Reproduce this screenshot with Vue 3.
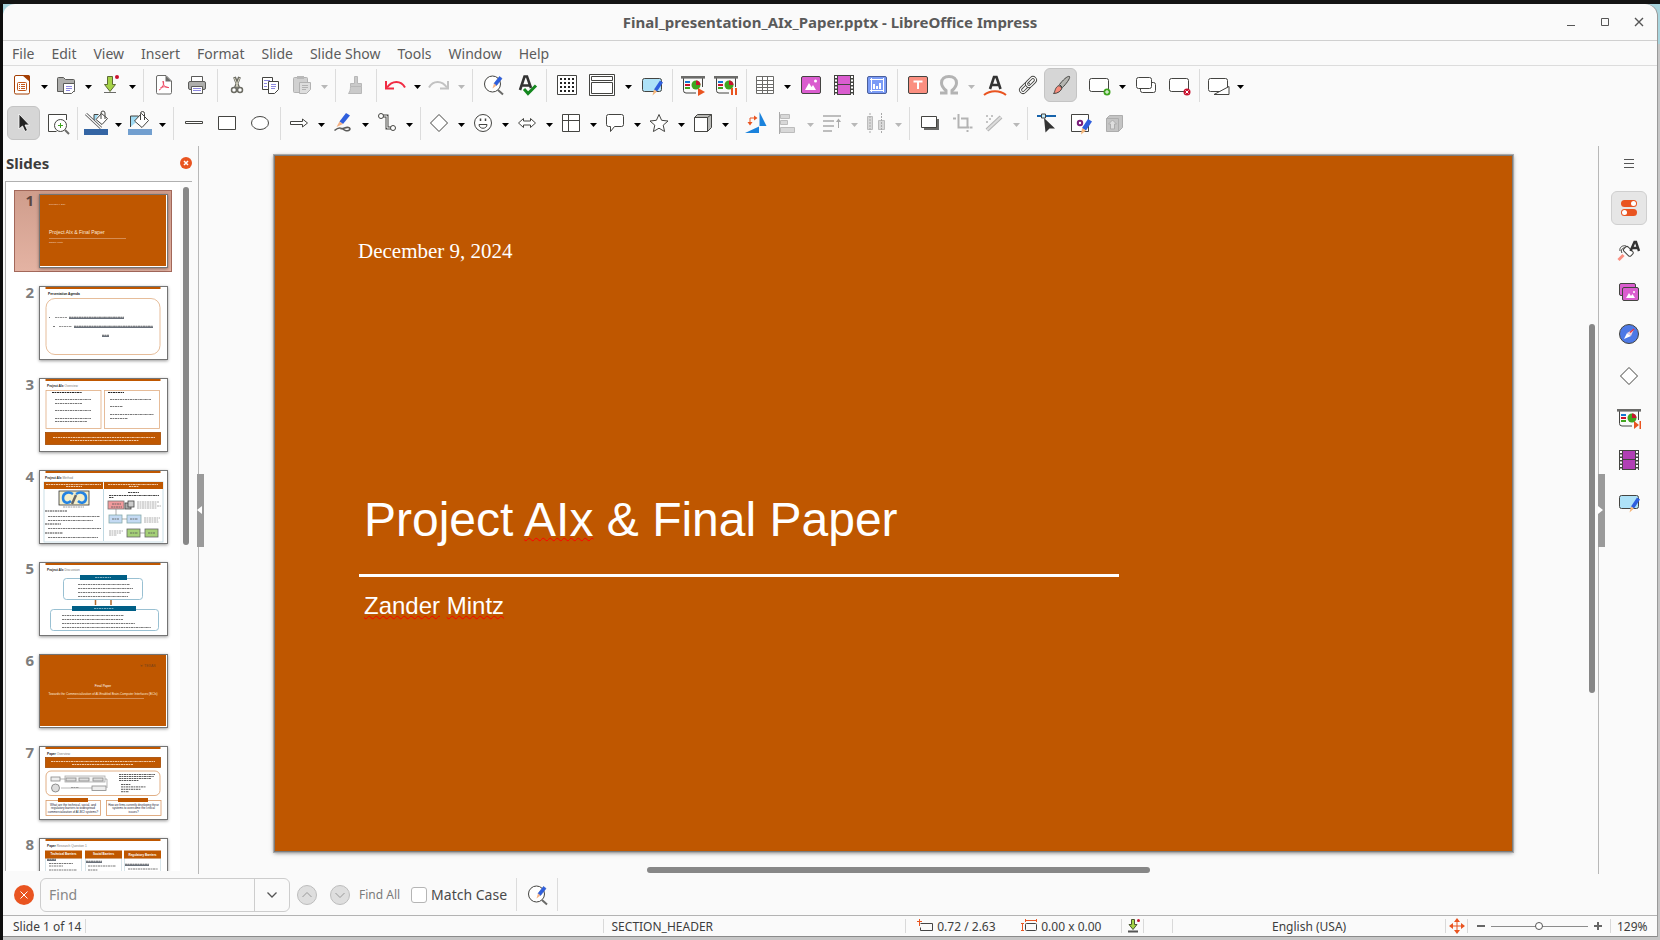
<script setup>
import { ref } from 'vue'

const menus = ['File', 'Edit', 'View', 'Insert', 'Format', 'Slide', 'Slide Show', 'Tools', 'Window', 'Help']

const dark = '#444441'
const gray = '#a9a9a9'

const pencil = '<path d="M18.5 3.5l2.5 2-5.5 7-2.5-2z" fill="#2f5fdd" stroke="#2450c4" stroke-width=".6"/><path d="M13 10.5l2.5 2-4 3z" fill="#f5b183"/>'
const screen = `<path d="M2.5 5v12.5a2.5 2.5 0 0 0 2.5 2.5h10M21.5 5v9" fill="none" stroke="${dark}"/><path d="M0 3h24v2.6H0z" fill="#6b6b69"/><path d="M4 8h5v2H4z" fill="#1279d3"/><path d="M4 11h5v2H4z" fill="#c9122f"/><path d="M4 14h5v2H4z" fill="#3fa51f"/><circle cx="15" cy="12" r="4.5" fill="#3fa51f"/><path d="M15 12V7.5a4.5 4.5 0 0 1 4.5 4.5z" fill="#c9122f"/>`
const boardPen = `<rect x="2.5" y="5.5" width="19" height="13" rx="2" fill="#aee2f8" stroke="${dark}"/><path d="M20 7.5l3 2-6 9-3-2z" fill="#2f5fdd"/><path d="M14 16.5l3 2-4.5 4z" fill="#f6b77a"/>`
const film = (fill) => `<path d="M2 2h20v20H2z" fill="${dark}"/><path d="M6 3h12v8H6zM6 12h12v9H6z" fill="${fill}"/><path d="M4 3v19M20 3v19" stroke="#fff" stroke-width="2" stroke-dasharray="2 1.5"/>`
const glass = `<circle cx="11.5" cy="11" r="8" fill="#fff" stroke="${dark}"/><path d="M17 17l5 4.5" stroke="#6b6b69" stroke-width="2"/>${pencil}`

const icons = {
  impress: `<path d="M4.5 4a1.5 1.5 0 0 1 1.5-1.5h12a1.5 1.5 0 0 1 1.5 1.5v15.5a1.5 1.5 0 0 1-1.5 1.5H6a1.5 1.5 0 0 1-1.5-1.5z" fill="#fff" stroke="#a33e03"/><path d="M12 2h6a2 2 0 0 1 2 2v5z" fill="#a33e03"/><rect x="7.5" y="9.5" width="9" height="8" rx="1" fill="none" stroke="#c2571a"/><path d="M9 11.5h1m1 0h4m-6 2h1m1 0h4m-6 2h1m1 0h4" stroke="#c2571a"/>`,
  folder: `<path d="M3.5 5.5a1 1 0 0 1 1-1h5l2 2h8a1 1 0 0 1 1 1v11h-17z" fill="#aeaeac" stroke="#5b5b59"/><path d="M9.5 10.5h11v7l-3 3h-8z" fill="#fff" stroke="#5b5b59"/><path d="M12 13.5h6m-6 2h6m-6 2h4" stroke="#8d88e0"/>`,
  save: `<path d="M9.5 3.5h5v8h3l-5.5 7-5.5-7h3z" fill="#a5d346" stroke="#5d6b35"/><path d="M6 19.5h12" stroke="#6b6b69"/><circle cx="19" cy="4" r="2" fill="#c9122f"/>`,
  pdf: `<path d="M4.5 4a1.5 1.5 0 0 1 1.5-1.5h8l5.5 5.5v11.5a1.5 1.5 0 0 1-1.5 1.5H6a1.5 1.5 0 0 1-1.5-1.5z" fill="#fff" stroke="#6b6b69"/><path d="M13.5 2.5l6 6h-6z" fill="#6b6b69"/><path d="M11 8c2 2-1 8-4 9M11 8c0 5 3 7 6 6.5M8.5 14.5c3-1 5-1 8 0" fill="none" stroke="#ee4a63"/>`,
  print: `<path d="M6.5 3.5h11v5h-11z" fill="#fff" stroke="#5b5b59"/><rect x="3.5" y="8.5" width="17" height="8" rx="1.5" fill="#aeaeac" stroke="#5b5b59"/><path d="M6.5 13.5h11v7h-11z" fill="#fff" stroke="#5b5b59"/><path d="M8 15.5h8m-8 2h8" stroke="#8d88e0"/>`,
  cut: `<path d="M8.5 4l4 10.5M13.5 4l-4 10.5" stroke="#6b6b62" stroke-width="3"/><path d="M8.5 5l3.5 9M13.5 5l-3.5 9" stroke="#d8d6c4"/><circle cx="8" cy="17" r="2.5" fill="#fff" stroke="#6b6b62" stroke-width="1.5"/><circle cx="14" cy="17" r="2.5" fill="#fff" stroke="#6b6b62" stroke-width="1.5"/>`,
  copy: `<path d="M3.5 4.5h10v12h-10z" fill="#fff" stroke="${dark}"/><path d="M5 7.5h6m-6 3h3m-3 3h3" stroke="#8d88e0"/><path d="M9.500 8.5h10v8l-4 4h-6z" fill="#fff" stroke="${dark}"/><path d="M12 11.5h5m-5 2h5m-5 2h4" stroke="#8d88e0"/>`,
  paste: '<rect x="3.5" y="4.5" width="14" height="15" rx="1" fill="#d0d0d0" stroke="#b2b2b2"/><path d="M7 3h7v3H7z" fill="#b8b8b8"/><path d="M9.5 9.5h11v7l-4 4h-7z" fill="#dedede" stroke="#b2b2b2"/><path d="M12 12.5h6m-6 2h6m-6 2h4" stroke="#b2b2b2"/>',
  clone: '<path d="M10.5 3.5h3v7h4v3h-11v-3h4z" fill="#cacaca" stroke="#b8b8b8"/><path d="M6.5 13.5h11v7h-13c1.5-2 2-4 2-7z" fill="#cacaca" stroke="#b8b8b8"/>',
  undo: '<path d="M4 14.5c5-7.5 14-7.5 18 0" fill="none" stroke="#f02b43" stroke-width="2"/><path d="M3 8v7.5h8" fill="none" stroke="#f02b43" stroke-width="2"/>',
  redo: '<path d="M20 14.5c-5-7.5-14-7.5-18 0" fill="none" stroke="#c2c2c2" stroke-width="2"/><path d="M21 8v7.5h-8" fill="none" stroke="#c2c2c2" stroke-width="2"/>',
  find: glass,
  spell: '<path d="M6 17l4.5-13.5H13L17 15M8 12.5h8" fill="none" stroke="#333" stroke-width="2.6"/><path d="M10 16l4 4.5 8-8" fill="none" stroke="#14871f" stroke-width="3"/>',
  grid: `<path d="M2.5 2.5h19v19h-19z" fill="#fff" stroke="${dark}"/><path d="M5 6h15M5 10h15M5 14h15M5 18h15" stroke="#222" stroke-width="2" stroke-dasharray="2 2"/>`,
  display: `<path d="M-1.5 1.5h25v21h-25z" fill="#fff" stroke="${dark}"/><path d="M.5 3.5h21v4H.5zM.5 9.5h21v11H.5z" fill="#fff" stroke="${dark}"/>`,
  master: boardPen,
  start: `${screen}<path d="M17 15l7 4-7 4z" fill="#e95420"/>`,
  pause: `${screen}<path d="M18 15v7m4-7v7" stroke="#e95420" stroke-width="2"/>`,
  table: `<path d="M3.5 3.5h17v17h-17zM3.5 7.5h17m-17 4h17m-17 3h17m-17 3h17M9.5 3.5v17m5-17v17" fill="#fff" stroke="#6b6b69"/>`,
  image: `<rect x="2.5" y="3.5" width="19" height="17" rx="1.5" fill="#da5dcf" stroke="${dark}"/><path d="M6 17l4-7 2.5 4 1.5-2 3 5z" fill="#fff"/><circle cx="16.5" cy="8" r="1.5" fill="#fff"/>`,
  video: film('#da5dcf'),
  chart: '<rect x="2.5" y="3.5" width="19" height="17" rx="1.5" fill="#7a9bf6" stroke="#4a5f9c"/><path d="M5 6.5h14M5 17.5h14M6.5 5v14M18.5 5v14" stroke="#fff"/><path d="M9 16v-5m3 5v-3m3 3v-6" stroke="#fff" stroke-width="2"/>',
  text: `<rect x="2.5" y="3.5" width="19" height="17" rx="1.5" fill="#fb8f80" stroke="${dark}"/><path d="M7.5 8.5h9M12 8v8" fill="none" stroke="#fff" stroke-width="2"/>`,
  omega: '<path d="M3 20h6v-2.5C6 15 4.5 13 4.5 10c0-4 3-6.5 7.5-6.5s7.5 2.5 7.5 6.5c0 3-1.5 5-4.5 7.5V20h6" fill="none" stroke="#b3b3b3" stroke-width="3"/>',
  fontwork: '<path d="M7 16l4-12h2.5l4 12M8.5 12h7.5" fill="none" stroke="#333" stroke-width="2.6"/><path d="M1 22c6-5 16-5 22 0" fill="none" stroke="#e95420" stroke-width="2"/>',
  link: `<g fill="none" transform="rotate(-45 12 12)"><rect x="2.5" y="9.5" width="10.5" height="5" rx="2.5" stroke="${dark}" stroke-width="3"/><rect x="2.5" y="9.5" width="10.5" height="5" rx="2.5" stroke="#fff" stroke-width="1.2"/><rect x="11" y="9.5" width="10.5" height="5" rx="2.5" stroke="${dark}" stroke-width="3"/><rect x="11" y="9.5" width="10.5" height="5" rx="2.5" stroke="#fff" stroke-width="1.2"/></g>`,
  brush: `<path d="M20.5 3.5c1 2-4 8-7 11l-3-3c3-4 8-9 10-8z" fill="#b5b5b1" stroke="${dark}"/><path d="M10 12.5l3 2.5c-1 3-4 5.5-8.5 5.5 2-2 1-6 5.5-8z" fill="#f88b7b" stroke="${dark}"/>`,
  slideNew: `<rect x="4.5" y="5.5" width="19" height="13" rx="2" fill="#fff" stroke="${dark}"/><circle cx="22" cy="19" r="3.5" fill="#3fa51f"/><path d="M20 19h4m-2-2v4" stroke="#fff"/>`,
  slideDup: `<rect x="6.5" y="9.5" width="15" height="10" rx="2" fill="#fff" stroke="${dark}"/><rect x="2.5" y="4.5" width="15" height="11" rx="2" fill="#fff" stroke="${dark}"/>`,
  slideDel: `<rect x="2.5" y="5.5" width="19" height="13" rx="2" fill="#fff" stroke="${dark}"/><circle cx="20" cy="19" r="3.5" fill="#c9122f"/><path d="M18.5 17.5l3 3m0-3l-3 3" stroke="#fff"/>`,
  slideLayout: `<rect x="2.5" y="5.5" width="19" height="13" rx="2" fill="#fff" stroke="${dark}"/><path d="M8 21.5h15v-8z" fill="#fff" stroke="${dark}"/>`,

  select: '<path d="M7 3v15l3.5-3 2.500 5.5 2.5-1.2-2.5-5.3h4.5z" fill="#222" stroke="#fff" stroke-width=".8"/>',
  zoomPan: `<path d="M21.5 9V3.5h-18v17h8" fill="#fff" stroke="${dark}"/><path d="M4 4h17v6H4z" fill="#fff"/><circle cx="15.5" cy="14.5" r="6" fill="#fff" stroke="${dark}"/><path d="M20 19l4 4" stroke="#6b6b69" stroke-width="2"/><path d="M15.5 12v5m-2.5-2.5h5" stroke="#3fa51f"/>`,
  lineColor: `<path d="M0 18h24v6H0z" fill="#3465a4"/><path d="M10 11V3.5h4.500" fill="#9fdaf3" stroke="${dark}"/><path d="M17.500 2.5l6 5-5.500 6-6-5z" fill="#fff" stroke="${dark}"/><path d="M17 8V2a2 2 0 0 1 4 0v6" fill="none" stroke="${dark}"/><path d="M2 3l15 14" stroke="#555" stroke-width="3"/><path d="M2 3l15 14" stroke="#fff" stroke-width="1.2"/>`,
  fillColor: `<path d="M0 18h24v6H0z" fill="#729fcf"/><path d="M2.5 16V5h8v4" fill="#9fdaf3" stroke="${dark}"/><path d="M13.5 2.5l7 7-6.5 7-7.5-6.5z" fill="#fff" stroke="${dark}"/><path d="M12.5 9V2.500a2 2 0 0 1 4 0V9" fill="none" stroke="${dark}"/>`,
  line: `<path d="M3.5 10.5h17v2h-17z" fill="#fff" stroke="${dark}"/>`,
  rect: `<path d="M3.5 5.5h17v13h-17z" fill="#fff" stroke="${dark}"/>`,
  ellipse: `<ellipse cx="12" cy="12" rx="8.5" ry="6.5" fill="#fff" stroke="${dark}"/>`,
  arrow: `<path d="M3.5 10.5h12v-2.5l5 4-5 4v-2.500h-12z" fill="#fff" stroke="${dark}"/>`,
  curve: `<path d="M15 2l4 2.5-7 8.5-3.5-2.5z" fill="#2f5fdd"/><path d="M8.5 10.5l3.5 2.5-6.5 3z" fill="#f5b183"/><path d="M3.500 19.5c6-5 8-1 11 0 4 1 6-2 3-3s-5 2-8 1" fill="none" stroke="#5b5b59" stroke-width="1.6"/>`,
  connector: `<path d="M5 5h7v12h7" fill="none" stroke="${dark}" stroke-width="3"/><path d="M5 5h7v12h7" fill="none" stroke="#fff"/><circle cx="6" cy="5" r="2.5" fill="#fff" stroke="${dark}"/><circle cx="18" cy="17" r="2.5" fill="#fff" stroke="${dark}"/>`,
  diamond: `<path d="M12 3.5l8.5 8.5-8.5 8.5L3.5 12z" fill="#fff" stroke="${dark}"/>`,
  smiley: `<circle cx="12" cy="12" r="8.5" fill="#fff" stroke="${dark}"/><path d="M9.5 7.5v2.500m5-2.5v2.5" stroke="${dark}" stroke-width="1.5"/><path d="M8 13.5h8c0 5-8 5-8 0z" fill="#fff" stroke="${dark}"/>`,
  doubleArrow: `<path d="M3.5 12l5-4.5v2.5h7V7.5l5 4.5-5 4.5V14h-7v2.5z" fill="#fff" stroke="${dark}"/>`,
  flow: `<path d="M3.5 3.5h17v17h-17zM3.5 9.5h17M9.5 3.5v17" fill="#fff" stroke="${dark}"/>`,
  callout: `<path d="M5.5 3.5h13a2 2 0 0 1 2 2v8a2 2 0 0 1-2 2h-7l-4 5v-5h-2a2 2 0 0 1-2-2v-8a2 2 0 0 1 2-2z" fill="#fff" stroke="${dark}"/>`,
  star: `<path d="M12 3.5l2.6 5.8 6.4.7-4.8 4.2 1.4 6.3-5.6-3.3-5.6 3.3 1.4-6.3L3 10l6.4-.7z" fill="#fff" stroke="${dark}"/>`,
  cube: `<path d="M3.5 6.5l3-3h14v13l-4 4z" fill="#b9b9b6" stroke="${dark}"/><path d="M3.5 6.5h13v14h-13zM16.500 6.5l4-3" fill="#fff" stroke="${dark}"/>`,
  rotate: '<path d="M14.5 1v14h7z" fill="#1a82dc"/><path d="M0 22l14-6.500v6.500z" fill="#1a82dc"/><path d="M5 12V7h6" fill="none" stroke="#e95420"/><path d="M2.5 11h5L5 14.5zM9 4.5v5l3.5-2.5z" fill="#e95420"/>',
  align: `<path d="M3.5 1v22" stroke="${gray}"/><path d="M4.5 3.5h9v4h-9zM4.5 9.5h7v4h-7zM4.5 16.5h14v5h-14z" fill="#d8d8d8" stroke="#bcbcbc"/>`,
  arrange: '<path d="M3 5h18M3 10h11M3 15h11M3 20h9" stroke="#bdbdbd" stroke-width="2"/><path d="M18.5 17V9" stroke="#a9a9a9"/><path d="M16 11l2.5-3.5L21 11z" fill="#a9a9a9"/>',
  distribute: '<path d="M3.5 5.5h5v13h-5zM14.5 9.5h6v9h-6z" fill="#d8d8d8" stroke="#bcbcbc"/><path d="M6 2v20M17.5 2v20" stroke="#a9a9a9" stroke-dasharray="2 1"/>',
  shadow: `<path d="M6 8h15v11H6z" fill="#6b6b69"/><path d="M3.5 5.5h15v11h-15z" fill="#fff" stroke="${dark}"/>`,
  crop: '<path d="M7.5 3v13.5H18M2 7.5h3m5 0h6.500v9.5m0 2v2m2-4.5h3" fill="none" stroke="#b3b3b3" stroke-width="2"/>',
  wand: '<path d="M5 19L19 6" stroke="#b3b3b3" stroke-width="4"/><path d="M5 19L19 6" stroke="#dcdcdc" stroke-width="2"/><path d="M4 5h2m3 0h2m-4 3h2M4 11h2" stroke="#b3b3b3" stroke-width="1.5"/>',
  points: '<path d="M1 5h19" stroke="#1763ab" stroke-width="2"/><path d="M5.5 3h4v4h-4z" fill="#c3ecfa" stroke="#444"/><path d="M8 7l11 10.500h-5.500l-4 4z" fill="#333"/>',
  glue: `<path d="M2.5 3.5h17v17h-17z" fill="#fff" stroke="${dark}"/><circle cx="11" cy="12" r="2.2" fill="#fff" stroke="#7b1f7b" stroke-width="2"/><path d="M19 8l4 2.500-6 9-4-2.500z" fill="#2f5fdd"/><path d="M13 17l4 2.500-5 4z" fill="#f6b77a"/>`,
  extrude: '<path d="M4.5 7.5l3-3h13v12l-4 4h-12z" fill="#c4c4c4" stroke="#adadad"/><path d="M4.5 7.5h12v13" fill="none" stroke="#adadad"/><path d="M8.500 18v-5h-2l4-4 4 4h-2v5z" fill="#dedede" stroke="#adadad"/>',

  properties: '<rect x="4" y="4" width="16" height="7" rx="3.5" fill="#e95420"/><rect x="4" y="13" width="16" height="7" rx="3.5" fill="#e95420"/><circle cx="16.5" cy="7.5" r="2.5" fill="#fff"/><circle cx="7.5" cy="16.5" r="2.5" fill="#fff"/>',
  styles: `<path d="M1.500 22l5-5" stroke="#fb8f80" stroke-width="3"/><path d="M3 13c-1-4 3-6 6-5M5 15c-2-3 1-6 4-5" fill="none" stroke="${dark}"/><rect x="8" y="8.500" width="6" height="10" rx="2" transform="rotate(-45 11 13)" fill="#fff" stroke="${dark}"/><path d="M13.500 13l4-9H19l3 9M15 10h6" fill="none" stroke="#333" stroke-width="2.4"/>`,
  gallery: `<rect x="2.5" y="3.5" width="16" height="12" rx="1.5" fill="#da5dcf" stroke="${dark}"/><rect x="5.5" y="7.5" width="16" height="13" rx="1.5" fill="#da5dcf" stroke="${dark}"/><path d="M9 18l3-5 2 3 1.5-2 2.5 4z" fill="#fff"/><circle cx="17" cy="12" r="1" fill="#fff"/>`,
  navigator: `<circle cx="12" cy="12" r="9.5" fill="#4d79e6" stroke="${dark}"/><path d="M7 17l3-6 4 3z" fill="#fff"/><path d="M10 11l7-4-3 7z" fill="#ecd3e0"/><path d="M13 10.5l4-3.5" stroke="#e0343f" stroke-width="1.5"/>`,
  transition: `${screen}<path d="M17 15l5 4-5 4zM22.5 15h1.500v8h-1.500z" fill="#e95420"/>`,
  animation: film('#b13fb5'),
  posSize: '<path d="M3.5 5.500h12v7h-12v-3" fill="none" stroke="#444"/><path d="M2.5 1v7M0 3.500h5" stroke="#e95420"/>',
  objSize: '<rect x="4.5" y="5.5" width="11" height="7" rx="1" fill="none" stroke="#444"/><path d="M4 2.5h12M4.5 1v3m11-3v3M1.5 5v8M0 5.5h3m-3 7h3" stroke="#e95420"/>',
  modified: '<path d="M6.5 1.5h3v5h2.500l-4 5-4-5h2.500z" fill="#a5d346" stroke="#4b5630"/><path d="M3 13.5h10" stroke="#555" stroke-width="2"/><circle cx="13.5" cy="2.5" r="1.5" fill="#c9122f"/>',
  fit: '<path d="M8 2v12M2 8h12" stroke="#e95420"/><path d="M8 0l3 4H5zM8 16l3-4H5zM0 8l4-3v6zM16 8l-4-3v6z" fill="#e95420"/>',
}

const standardBar = [
  { icon: 'impress', drop: true },
  { icon: 'folder', drop: true },
  { icon: 'save', drop: true },
  'sep',
  { icon: 'pdf' },
  { icon: 'print' },
  'sep',
  { icon: 'cut' },
  { icon: 'copy' },
  { icon: 'paste', drop: true, off: true },
  'sep',
  { icon: 'clone', off: true },
  'sep',
  { icon: 'undo', drop: true },
  { icon: 'redo', drop: true, off: true },
  'sep',
  { icon: 'find' },
  { icon: 'spell' },
  'sep',
  { icon: 'grid' },
  { icon: 'display', drop: true, wide: true },
  { icon: 'master' },
  'sep',
  { icon: 'start' },
  { icon: 'pause' },
  'sep',
  { icon: 'table', drop: true },
  { icon: 'image' },
  { icon: 'video' },
  { icon: 'chart' },
  'sep',
  { icon: 'text' },
  { icon: 'omega', drop: true, off: true },
  { icon: 'fontwork' },
  { icon: 'link' },
  { icon: 'brush', active: true },
  { icon: 'slideNew', drop: true, wide: true },
  { icon: 'slideDup' },
  { icon: 'slideDel' },
  'sep',
  { icon: 'slideLayout', drop: true },
]

const drawingBar = [
  { icon: 'select', active: true },
  { icon: 'zoomPan' },
  'sep',
  { icon: 'lineColor', drop: true },
  { icon: 'fillColor', drop: true },
  'sep',
  { icon: 'line' },
  { icon: 'rect' },
  { icon: 'ellipse' },
  'sep',
  { icon: 'arrow', drop: true },
  { icon: 'curve', drop: true },
  { icon: 'connector', drop: true },
  'sep',
  { icon: 'diamond', drop: true },
  { icon: 'smiley', drop: true },
  { icon: 'doubleArrow', drop: true },
  { icon: 'flow', drop: true },
  { icon: 'callout', drop: true },
  { icon: 'star', drop: true },
  { icon: 'cube', drop: true },
  'sep',
  { icon: 'rotate' },
  { icon: 'align', drop: true, off: true },
  { icon: 'arrange', drop: true, off: true },
  { icon: 'distribute', drop: true, off: true },
  'sep',
  { icon: 'shadow' },
  { icon: 'crop', off: true },
  { icon: 'wand', drop: true, off: true },
  'sep',
  { icon: 'points' },
  { icon: 'glue' },
  { icon: 'extrude', off: true },
]

const sidebar = ['properties', 'styles', 'gallery', 'navigator', 'diamond', 'transition', 'animation', 'master']

// thumbnails, drawn on a 129 x 74 sheet
const orange = '#bf5700'
const row = (x, y, w, color = '#555', h = 0.8) =>
  `<path d="M${x} ${y}h${w}" stroke="${color}" stroke-width="${h}" stroke-dasharray="2.5 .5 1.3 .6"/>`
const rows = (x, y, step, widths, color) => widths.map((w, i) => row(x, y + i * step, w, color)).join('')
const linkRow = (x, y, w) => row(x, y - 0.8, w, '#555') + `<path d="M${x} ${y + 0.2}h${w}" stroke="#27313f"/>`
const box = (x, y, w, h, fill, stroke = 'none', r = 0) =>
  `<rect x="${x}" y="${y}" width="${w}" height="${h}" rx="${r}" fill="${fill}" stroke="${stroke}" stroke-width=".8"/>`
const label = (x, y, text, size = 3, color = '#222', extra = '') =>
  `<text x="${x}" y="${y}" font-size="${size}" fill="${color}" ${extra}>${text}</text>`
const middle = 'text-anchor="middle"'
const topBar = box(6.5, 1, 115, 2, orange)
const heading = (x, bold, rest) =>
  label(x, 9, `<tspan font-weight="700">${bold}</tspan> <tspan fill="#777">${rest}</tspan>`, 3.2)

const slides = [
  box(1, 1, 126, 71, orange) +
    label(10, 11, 'December 9, 2024', 2, '#f3dcc8') +
    label(10, 40, 'Project AIx &amp; Final Paper', 5, '#fbe9da') +
    '<path d="M10 44.5h77" stroke="#e0a577" stroke-width=".7"/>' +
    label(10, 48.5, 'Zander Mintz', 2.4, '#f3dcc8'),
  topBar +
    label(9, 9, 'Presentation Agenda', 3.2, '#111', 'font-weight="700"') +
    box(7, 12.5, 114, 56, 'none', '#e0ac80', 9) +
    row(10, 31.5, 1) + row(16, 31.5, 12, '#777') + linkRow(30, 32, 55) +
    row(14, 40.5, 2) + row(20, 40.5, 13, '#777') + linkRow(35, 41, 79) +
    linkRow(63, 50, 7),
  topBar +
    heading(8, 'Project AIx', 'Overview') +
    box(7, 12.5, 55, 38, 'none', '#e0ac80') + box(65.5, 12.5, 55, 38, 'none', '#e0ac80') +
    row(13, 14.5, 30, '#222', 1) + row(69, 14.5, 16, '#222', 1) +
    rows(16, 21.5, 4, [36, 27]) + rows(16, 32.5, 8, [36, 36]) + row(16, 43.5, 32) +
    rows(71, 21.5, 7, [41, 13]) + rows(71, 36.5, 4, [44, 18]) +
    box(6.5, 54.5, 115, 12, orange, '#a34a00') +
    row(14, 59.5, 102, '#ffe8d6') + row(31, 62.5, 69, '#ffe8d6'),
  topBar +
    heading(6, 'Project AIx', 'Method') +
    box(5, 12, 119, 60, 'none', '#bfd8e2') +
    box(5, 12, 59, 7, orange) + box(65, 12, 59, 7, orange) +
    row(7, 14.5, 55, '#ffe8d6') + row(27, 16.5, 16, '#ffe8d6') + row(69, 14.5, 50, '#ffe8d6') + row(90, 16.5, 10, '#ffe8d6') +
    '<path d="M64.5 19v52" stroke="#bfd8e2"/>' +
    box(20, 21, 30, 14, '#f4efcb', '#333') +
    '<path d="M34 24c-5-3-10-1-10 4s5 6 8 3M37 24c5-3 10-1 10 4s-5 6-8 3" fill="none" stroke="#2383e2" stroke-width="2.5"/><path d="M33 34l4-9" stroke="#666" stroke-width="2.5"/>' +
    row(24, 37, 21, '#888') +
    rows(6, 41, 13, [22, 16], '#111') + rows(9, 46.5, 4, [52, 45]) + row(9, 58.5, 53) + row(6, 63, 18, '#111') + row(9, 67.5, 50) +
    row(89, 22.5, 11, '#111') + rows(70, 25.5, 2, [50, 5], '#111') +
    box(69, 31, 16, 8, '#f19a9c', '#777') + row(73, 34, 9) + row(72, 37, 11) +
    box(86, 33, 6, 6, '#aaa', '#444') + box(89, 31, 6, 6, '#ccc', '#444') +
    rows(98, 32, 2, [22, 20, 24, 20], '#999') +
    box(70, 45, 13, 8, '#c4daf3', '#8aa') + box(88, 45, 14, 8, '#c4daf3', '#8aa') + row(73, 49, 7) + row(91, 49, 8) +
    rows(105, 48, 2, [16, 14, 15], '#999') + '<path d="M77 39v6M83 49h5" stroke="#777" stroke-width=".6"/>' +
    rows(70, 61, 2, [14, 12, 8], '#999') +
    box(88, 59, 13, 8, '#a5d077', '#666') + box(106, 59, 13, 8, '#a5d077', '#666') + row(91, 63, 8) + row(109, 63, 7) +
    '<path d="M101 63h5" stroke="#777" stroke-width=".6"/>',
  topBar +
    heading(8, 'Project AIx', 'Discussion') +
    box(24.5, 16.5, 79, 21, 'none', '#7fb0c6', 3) + box(11.5, 47.5, 108, 21, 'none', '#7fb0c6', 3) +
    box(41, 13, 47, 5, '#005f86') + box(33, 44, 64, 5, '#005f86') +
    row(56, 15.5, 16, '#9fc6d6') + row(55, 46.5, 20, '#9fc6d6') +
    rows(39, 22.5, 4, [52, 55, 52, 50]) + rows(23, 53.5, 4, [62, 61, 73, 89]) +
    '<path d="M56.5 38v5M72 43v-5" stroke="#b26a2c" stroke-width="1.5"/>',
  box(1, 1, 126, 71, orange) +
    label(101, 13, '⛨ TEXAS', 3.6, '#75421c') +
    label(64, 32.5, 'Final Paper', 3.2, '#fff', middle) +
    label(64, 40.5, 'Towards the Commercialization of AI-Enabled Brain-Computer Interfaces (BCIs)', 3.1, '#fbe9da', middle) +
    '<path d="M28 44.5h77" stroke="#e0a577" stroke-width=".7"/>',
  topBar +
    heading(8, 'Paper', 'Overview') +
    box(6.5, 11.5, 115, 10, orange, '#a34a00') +
    row(12, 15.5, 104, '#ffe8d6') + row(33, 18.5, 61, '#ffe8d6') +
    box(7, 25, 114, 24.5, 'none', '#d99a66', 5) +
    box(12, 31, 9, 4, '#eee', '#888') + '<circle cx="16.5" cy="42" r="4" fill="#ddd" stroke="#777" stroke-width=".8"/>' +
    box(26, 30, 40, 6, '#f4f4f4', '#aaa') + box(27, 32, 10, 3, '#ddd', '#888') + box(40, 32, 10, 3, '#ddd', '#888') + box(54, 32, 10, 3, '#ddd', '#888') +
    box(53, 40, 14, 4.5, '#eee', '#888') + '<path d="M21 33h5m40 0h2v9M53 42H22" stroke="#888" fill="none" stroke-width=".6"/>' + row(32, 41.5, 8, '#888') +
    rows(80, 28.5, 2, [36, 35, 32, 20], '#333') + rows(82, 38.5, 2.4, [10, 25, 20, 8], '#333') +
    box(7, 54.5, 54.5, 15, 'none', '#d99a66') + box(67.5, 54.5, 54.5, 15, 'none', '#d99a66') +
    box(19, 52, 30, 4, orange) + box(79, 52, 30, 4, orange) +
    label(34, 59.5, 'What are the technical, social, and', 3, '#223', middle) +
    label(34, 63, 'regulatory barriers to widespread', 3, '#223', middle) +
    label(34, 66.5, 'commercialization of AI-BCI systems?', 3, '#223', middle) +
    label(94.5, 59.5, 'How are firms currently developing these', 2.8, '#223', middle) +
    label(94.5, 63, 'systems to overcome the critical', 3, '#223', middle) +
    label(94.5, 66.5, 'issues?', 3, '#223', middle),
  topBar +
    heading(8, 'Paper', 'Research Question 1') +
    box(6.5, 20, 36, 60, 'none', '#cfdfe5') + box(46.5, 20, 36, 60, 'none', '#cfdfe5') + box(85.5, 20, 36, 60, 'none', '#cfdfe5') +
    box(6, 12.5, 37, 8, orange) + box(46, 12.5, 37, 8, orange) + box(85, 12.5, 37, 8, orange) +
    label(24.5, 16.5, 'Technical Barriers', 3, '#fff', `${middle} font-weight="700"`) +
    label(64.5, 16.5, 'Social Barriers', 3, '#fff', `${middle} font-weight="700"`) +
    label(103.5, 17.5, 'Regulatory Barriers', 3, '#fff', `${middle} font-weight="700"`) +
    linkRow(8, 22, 9) + linkRow(47, 24, 16) + linkRow(86, 27, 24) +
    rows(10, 25.5, 2.5, [24, 14]) + row(10, 32, 28) + row(49, 28, 28) + row(49, 32, 10) + rows(89, 31, 2.5, [30, 18]),
]

const current = ref(0)
const findText = ref('')
const matchCase = ref(false)
const zoom = ref(50)
</script>

<template>
  <div class="desktop">
    <div class="window">
      <header class="titlebar">
        <h1>Final_presentation_AIx_Paper.pptx - LibreOffice Impress</h1>
        <div class="window-buttons">
          <button type="button" aria-label="Minimize">
            <svg width="10" height="10"><path d="M1 8.5h8" stroke="#555" stroke-width="1" /></svg>
          </button>
          <button type="button" aria-label="Maximize">
            <svg width="10" height="10"><path d="M1.5 1.5h7v7h-7z" fill="none" stroke="#555" /></svg>
          </button>
          <button type="button" aria-label="Close">
            <svg width="10" height="10"><path d="M1 1l8 8m0-8l-8 8" stroke="#555" stroke-width="1.4" /></svg>
          </button>
        </div>
      </header>

      <nav class="menubar">
        <button v-for="menu in menus" :key="menu" type="button">{{ menu }}</button>
      </nav>

      <div v-for="(bar, b) in [standardBar, drawingBar]" :key="b" class="toolbar">
        <template v-for="(item, i) in bar" :key="i">
          <span v-if="item === 'sep'" class="sep"></span>
          <div v-else class="tool" :class="{ split: item.drop, wide: item.wide }">
            <button class="tool-button" :class="{ active: item.active }" type="button" :aria-label="item.icon">
              <svg width="24" height="24" viewBox="0 0 24 24" v-html="icons[item.icon]"></svg>
            </button>
            <button v-if="item.drop" class="drop" :class="{ off: item.off }" type="button" :aria-label="item.icon + ' options'">
              <svg width="7" height="4"><path d="M0 0h7L3.5 4z" fill="currentColor" /></svg>
            </button>
          </div>
        </template>
      </div>

      <main class="main">
        <aside class="slides-panel">
          <div class="panel-head">
            <h2>Slides</h2>
            <button type="button" aria-label="Close panel">
              <svg width="12" height="12"><circle cx="6" cy="6" r="6" fill="#e95420" /><path d="M4 4l4 4m0-4l-4 4" stroke="#fff" stroke-width="1.5" /></svg>
            </button>
          </div>
          <div class="slide-list-wrap">
            <ul class="slide-list">
              <li
                v-for="(slide, i) in slides"
                :key="i"
                class="slide-item"
                :class="{ selected: i === current }"
                @click="current = i"
              >
                <span class="slide-number">{{ i + 1 }}</span>
                <svg class="thumb" width="129" height="74" viewBox="0 0 129 74">
                  <rect width="129" height="74" fill="#fff" />
                  <g v-html="slide"></g>
                  <rect x=".5" y=".5" width="128" height="73" fill="none" stroke="#747474" />
                </svg>
              </li>
            </ul>
            <div class="list-track"><div class="list-thumb"></div></div>
          </div>
          <button type="button" class="splitter left" aria-label="Hide slides">
            <svg width="5" height="8"><path d="M5 0v8L0 4z" fill="#fff" /></svg>
          </button>
        </aside>

        <section class="workspace">
          <div class="canvas-row">
            <article class="slide">
              <p class="slide-date">December 9, 2024</p>
              <p class="slide-title">Project <span class="misspelt">AIx</span> &amp; Final Paper</p>
              <hr class="slide-rule" />
              <p class="slide-author"><span class="misspelt">Zander</span> <span class="misspelt">Mintz</span></p>
            </article>
            <div class="v-track"><div class="v-thumb"></div></div>
          </div>
          <div class="h-track"><div class="h-thumb"></div></div>
        </section>

        <aside class="sidebar">
          <button type="button" class="splitter right" aria-label="Hide sidebar">
            <svg width="5" height="8"><path d="M0 0v8l5-4z" fill="#fff" /></svg>
          </button>
          <button type="button" class="side-button menu" aria-label="Sidebar settings">
            <svg width="10" height="9"><path d="M0 .5h10M0 4.5h10M0 8.5h10" stroke="#555" /></svg>
          </button>
          <button
            v-for="(name, i) in sidebar"
            :key="name"
            type="button"
            class="side-button"
            :class="{ active: i === 0 }"
            :aria-label="name"
          >
            <svg width="24" height="24" viewBox="0 0 24 24" v-html="icons[name]"></svg>
          </button>
        </aside>
      </main>

      <div class="findbar">
        <button type="button" aria-label="Close find bar">
          <svg width="20" height="20"><circle cx="10" cy="10" r="10" fill="#e95420" /><path d="M6.5 6.5l7 7m0-7l-7 7" stroke="#fff" /></svg>
        </button>
        <div class="find-box">
          <input v-model="findText" type="text" placeholder="Find" aria-label="Find" />
          <button type="button" aria-label="Search history">
            <svg width="12" height="8"><path d="M1.5 1.5L6 6l4.500-4.500" fill="none" stroke="#555" stroke-width="1.3" /></svg>
          </button>
        </div>
        <button type="button" class="round" aria-label="Find previous">
          <svg width="20" height="20"><circle cx="10" cy="10" r="9.5" fill="#dedede" stroke="#bdbdbd" /><path d="M5.5 12l4.5-4.5 4.5 4.5" fill="none" stroke="#999" /></svg>
        </button>
        <button type="button" class="round" aria-label="Find next">
          <svg width="20" height="20"><circle cx="10" cy="10" r="9.5" fill="#dedede" stroke="#bdbdbd" /><path d="M5.5 8l4.5 4.5L14.5 8" fill="none" stroke="#999" /></svg>
        </button>
        <button type="button" class="find-all">Find All</button>
        <input id="match-case" v-model="matchCase" type="checkbox" />
        <label for="match-case">Match Case</label>
        <span class="sep"></span>
        <button type="button" class="tool-button" aria-label="Find and replace">
          <svg width="24" height="24" viewBox="0 0 24 24" v-html="icons.find"></svg>
        </button>
        <span class="sep"></span>
      </div>

      <footer class="statusbar">
        <span class="cell page">Slide 1 of 14</span>
        <span class="cell info"></span>
        <span class="cell layout">SECTION_HEADER</span>
        <span class="cell position">
          <svg width="17" height="16" v-html="icons.posSize"></svg>
          <span class="coords">0.72 / 2.63</span>
          <svg width="17" height="16" v-html="icons.objSize"></svg>
          <span>0.00 x 0.00</span>
        </span>
        <span class="cell tiny"><svg width="16" height="16" v-html="icons.modified"></svg></span>
        <span class="cell blank"></span>
        <span class="cell language">English (USA)</span>
        <span class="cell tiny"><svg width="16" height="16" v-html="icons.fit"></svg></span>
        <span class="cell zoom">
          <button type="button" aria-label="Zoom out"><svg width="8" height="8"><path d="M0 4h8" stroke="#666" stroke-width="2" /></svg></button>
          <input v-model="zoom" type="range" min="0" max="100" aria-label="Zoom" />
          <button type="button" aria-label="Zoom in"><svg width="8" height="8"><path d="M0 4h8M4 0v8" stroke="#666" stroke-width="2" /></svg></button>
        </span>
        <span class="percent">129%</span>
      </footer>
    </div>
  </div>
</template>

<style>
body {
  margin: 0;
  background: #c6c6c6;
}
</style>

<style scoped>
.desktop {
  height: 100vh;
  box-sizing: border-box;
  padding: 4px 3px 3px;
  background:
    linear-gradient(#141414, #141414) 0 0 / 100% 4px no-repeat,
    linear-gradient(#0d0d0d, #0d0d0d) 0 0 / 3px 100% no-repeat,
    linear-gradient(#a9d5de, #a9d5de) 0 0 / 100% 44px no-repeat,
    #c6c6c6;
  font-family: 'Noto Sans', 'Open Sans', sans-serif;
  font-size: 14px;
  color: #3d3d3d;
  overflow: hidden;
}

.window {
  height: 100%;
  box-sizing: border-box;
  display: flex;
  flex-direction: column;
  background: #fafafa;
  border-bottom: 1px solid #8a8a8a;
  border-radius: 12px 12px 0 0;
  box-shadow: 1px 0 0 #999;
}

button {
  border: none;
  background: none;
  padding: 0;
  margin: 0;
  font: inherit;
  color: inherit;
}

svg {
  display: block;
  flex-shrink: 0;
  overflow: visible;
}

.titlebar {
  height: 36px;
  flex-shrink: 0;
  display: grid;
  grid-template-columns: 1fr auto 1fr;
  align-items: center;
  border-bottom: 1px solid #d0d0d0;
}

.titlebar h1 {
  grid-column: 2;
  margin: 0;
  font-size: 15px;
  font-weight: 700;
  color: #5a5a5a;
}

.window-buttons {
  display: flex;
  justify-content: flex-end;
  gap: 24px;
  padding-right: 13px;
}

.menubar {
  height: 24px;
  flex-shrink: 0;
  display: flex;
  align-items: center;
  gap: 17px;
  padding-left: 9px;
  border-bottom: 1px solid #dcdcdc;
  color: #5c5c5c;
}

.toolbar {
  height: 38px;
  flex-shrink: 0;
  display: flex;
  align-items: center;
  padding-left: 4px;
}

.tool {
  display: flex;
}

.tool-button {
  width: 33px;
  height: 34px;
  box-sizing: border-box;
  display: flex;
  align-items: center;
  padding-left: 5px;
  border-radius: 6px;
}

.split .tool-button {
  width: 29px;
  padding-left: 3px;
}

.wide .tool-button {
  width: 37px;
  padding-left: 8px;
}

.tool-button.active {
  padding-left: 4px;
  background: #d6d6d6;
  border: 1px solid #c4c4c4;
}

.drop {
  width: 15px;
  display: flex;
  align-items: center;
  justify-content: flex-end;
  padding: 3px 3px 0 0;
  box-sizing: border-box;
  color: #000;
}

.drop.off {
  color: #b8b8b8;
}

.sep {
  width: 1px;
  height: 33px;
  margin: 0 3px 0 4px;
  background: #dcdcdc;
}

.main {
  flex: 1;
  min-height: 0;
  display: flex;
  margin-top: 4px;
}

.slides-panel {
  position: relative;
  width: 195px;
  flex-shrink: 0;
  display: flex;
  flex-direction: column;
  border-right: 1px solid #b8b8b8;
}

.panel-head {
  height: 35px;
  box-sizing: border-box;
  flex-shrink: 0;
  display: flex;
  align-items: center;
  justify-content: space-between;
  padding: 0 6px 2px 3px;
}

.panel-head h2 {
  margin: 0;
  font-size: 15px;
  font-weight: 700;
}

.slide-list-wrap {
  flex: 1;
  min-height: 0;
  display: flex;
  margin: 0 6px 3px 2px;
  border-top: 1px solid #b0b0b0;
  border-left: 1px solid #b0b0b0;
  background: #fff;
}

.slide-list {
  flex: 1;
  margin: 0;
  padding: 8px 8px 0;
  list-style: none;
  overflow: hidden;
}

.slide-item {
  height: 82px;
  box-sizing: border-box;
  display: flex;
  justify-content: flex-end;
  gap: 5px;
  margin-bottom: 10px;
  padding: 3px 3px 0 0;
  border: 1px solid transparent;
  color: #7d7d7d;
}

.slide-item.selected {
  background: linear-gradient(#cf9d8c, #e4b3a3);
  border-color: #a3685a;
  color: #5c463f;
}

.slide-number {
  font-size: 15px;
  font-weight: 700;
  line-height: 13px;
}

.thumb {
  font-family: 'Liberation Sans', Arial, sans-serif;
  overflow: hidden;
  box-shadow: 0 1px 3px rgba(0, 0, 0, 0.4);
}

.list-track {
  width: 12px;
  background: #fafafa;
}

.list-thumb {
  width: 6px;
  height: 52%;
  margin: 5px 0 0 3px;
  border-radius: 3px;
  background: #878787;
}

.splitter {
  position: absolute;
  top: 45%;
  width: 7px;
  height: 73px;
  display: flex;
  align-items: center;
  background: #9a9a9a;
}

.splitter.left {
  right: -6px;
}

.splitter.right {
  left: -1px;
}

.workspace {
  flex: 1;
  min-width: 0;
  display: flex;
  flex-direction: column;
}

.canvas-row {
  flex: 1;
  min-height: 0;
  display: flex;
  padding: 9px 3px 0 75px;
}

.slide {
  flex: 1;
  box-sizing: border-box;
  padding: 83px 83px 0;
  border: 1px solid #7c7c7c;
  outline: 1px solid #a8a8a8;
  background: #bf5700;
  box-shadow: 0 1px 4px rgba(0, 0, 0, 0.5);
  color: #fff;
}

.slide p {
  margin: 0;
  white-space: nowrap;
}

.slide-date {
  font-family: 'Liberation Serif', 'Times New Roman', serif;
  font-size: 21px;
  line-height: 24px;
}

.slide .slide-title {
  margin: 229px 0 0 6px;
  font-family: 'Liberation Sans', Arial, sans-serif;
  font-size: 48px;
  line-height: 56px;
}

.slide-rule {
  width: 71%;
  height: 3px;
  margin: 26px 0 15px 1px;
  border: none;
  background: #fff;
}

.slide .slide-author {
  margin-left: 6px;
  font-family: 'Liberation Sans', Arial, sans-serif;
  font-size: 24px;
  line-height: 28px;
}

.misspelt {
  text-decoration: underline wavy #f00 1px;
  text-decoration-skip-ink: none;
  text-underline-offset: 1px;
}

.v-track {
  width: 6px;
  margin-left: 76px;
}

.v-thumb {
  width: 6px;
  height: 53%;
  margin-top: 169px;
  border-radius: 3px;
  background: #878787;
}

.h-track {
  height: 6px;
  margin: 15px 0 1px;
}

.h-thumb {
  width: 36%;
  height: 6px;
  margin-left: 32%;
  border-radius: 3px;
  background: #878787;
}

.sidebar {
  position: relative;
  width: 57px;
  flex-shrink: 0;
  display: flex;
  flex-direction: column;
  align-items: center;
  gap: 8px;
  padding-left: 1px;
  border-left: 1px solid #b8b8b8;
}

.side-button {
  width: 36px;
  height: 34px;
  box-sizing: border-box;
  display: flex;
  align-items: center;
  justify-content: center;
  border: 1px solid transparent;
  border-radius: 6px;
}

.side-button.menu {
  margin: 0 0 3px;
}

.side-button.active {
  background: #e6e6e6;
  border-color: #cfcfcf;
}

.findbar {
  height: 41px;
  flex-shrink: 0;
  display: flex;
  align-items: center;
  padding-left: 11px;
  color: #4a4a4a;
}

.find-box {
  width: 250px;
  height: 34px;
  box-sizing: border-box;
  display: flex;
  margin: 0 7px 0 6px;
  border: 1px solid #cdcdcd;
  border-radius: 6px;
}

.find-box input {
  flex: 1;
  min-width: 0;
  padding: 0 8px;
  border: none;
  border-right: 1px solid #cdcdcd;
  outline: none;
  background: none;
  font: inherit;
}

.find-box input::placeholder {
  color: #868686;
}

.find-box button {
  width: 34px;
  display: flex;
  align-items: center;
  justify-content: center;
}

.round {
  margin-right: 13px;
}

.find-all {
  margin: 0 11px 0 -4px;
  font-size: 12px;
  color: #7a7a7a;
}

.findbar input[type='checkbox'] {
  appearance: none;
  width: 16px;
  height: 16px;
  margin: 0 4px 0 0;
  border: 1px solid #b5b5b5;
  border-radius: 3px;
  background: #fff;
}

.findbar label {
  margin-right: 5px;
}

.statusbar {
  height: 20px;
  flex-shrink: 0;
  display: flex;
  align-items: center;
  border-top: 1px solid #b3b3b3;
  font-size: 12px;
}

.cell {
  height: 14px;
  box-sizing: border-box;
  display: flex;
  align-items: center;
  border-right: 1px solid #d9d9d9;
}

.page {
  width: 83px;
  padding-left: 10px;
}

.info {
  flex: 517 0 0;
}

.layout {
  flex: 302 0 0;
  text-indent: 8px;
}

.position {
  width: 216px;
  box-sizing: border-box;
  padding-left: 11px;
  gap: 3px;
}

.coords {
  width: 81px;
}

.tiny {
  width: 22px;
  justify-content: center;
}

.blank {
  width: 29px;
}

.language {
  flex: 272 0 0;
  justify-content: center;
}

.zoom {
  width: 143px;
  justify-content: center;
  gap: 6px;
}

.zoom input {
  appearance: none;
  width: 97px;
  height: 8px;
  margin: 0;
  background: linear-gradient(#8c8c8c, #8c8c8c) center / 100% 1px no-repeat;
}

.zoom input::-webkit-slider-thumb {
  appearance: none;
  width: 8px;
  height: 8px;
  box-sizing: border-box;
  border: 1px solid #555;
  border-radius: 50%;
  background: #fff;
}

.percent {
  width: 46px;
  padding-left: 6px;
  box-sizing: border-box;
}
</style>
